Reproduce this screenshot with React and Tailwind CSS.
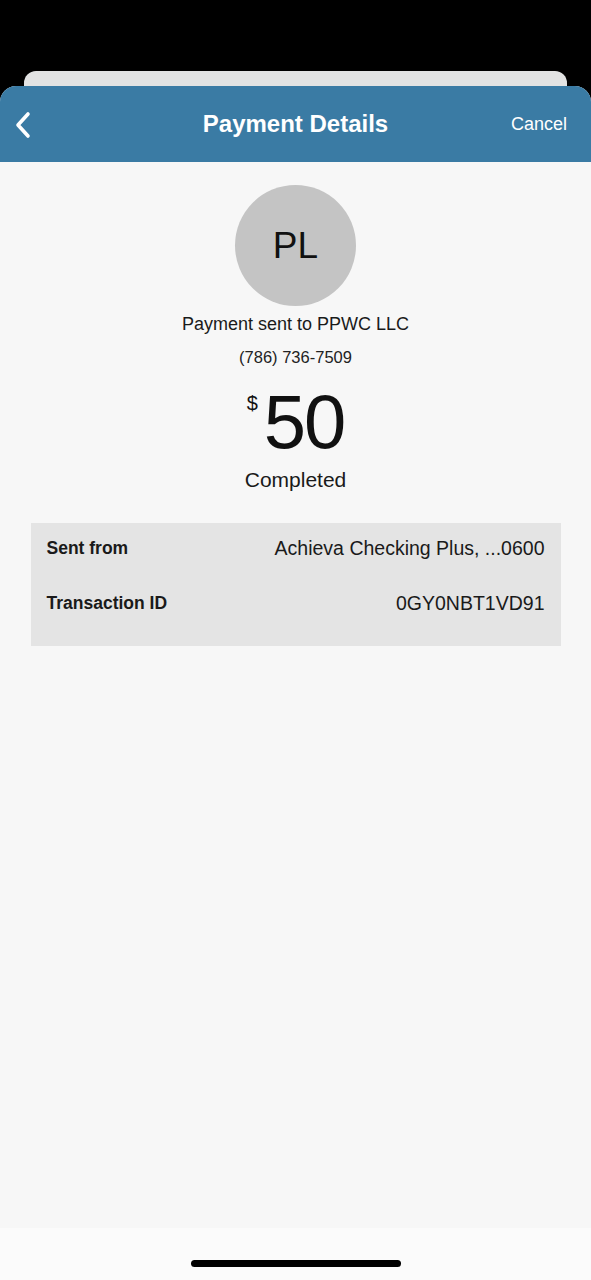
export default function App() {
  return (
    <div
      className="w-[591px] h-[1280px] bg-black flex flex-col overflow-hidden"
      style={{ fontFamily: '"Liberation Sans", Arial, sans-serif' }}
    >
      {/* sheet behind */}
      <div className="h-[71px]" />
      <div className="mx-[24px] h-[15px] bg-[#e2e3e3] rounded-t-[12px]" />

      <div className="flex-1 flex flex-col bg-[#f7f7f7] rounded-t-[16px] overflow-hidden">
        <header className="h-[76px] bg-[#3a7ba4] flex items-center justify-between pl-[14px] relative">
          <svg width="18" height="28" viewBox="0 0 18 28" className="mt-[1px]">
            <polyline points="14,3 4,14 14,25" fill="none" stroke="white" strokeWidth="3.6" strokeLinecap="round" strokeLinejoin="round" />
          </svg>
          <h1 className="absolute left-0 right-0 text-center text-white font-bold text-[24px] pointer-events-none">
            Payment Details
          </h1>
          <span className="text-white text-[18px] pr-[24px]">Cancel</span>
        </header>

        <main className="flex-1 flex flex-col items-center">
          <div className="mt-[23px] w-[121px] h-[121px] rounded-full bg-[#c4c4c4] flex items-center justify-center">
            <span className="text-[37px] text-[#111] leading-none">PL</span>
          </div>
          <p className="mt-[5px] text-[18px] text-[#1a1a1a]">Payment sent to PPWC LLC</p>
          <p className="mt-[7px] text-[16.5px] text-[#222]">(786) 736-7509</p>
          <div className="mt-[12px] flex items-start">
            <span className="text-[20px] text-[#111] mt-[6px] mr-[6px]">$</span>
            <span className="text-[76px] leading-[80px] text-[#111] tracking-[-2px]">50</span>
          </div>
          <p className="mt-[2px] text-[21px] text-[#1a1a1a]">Completed</p>

          <div className="mt-[28px] w-[530px] bg-[#e4e4e4] px-[16px] pt-[14px] pb-[32px] flex flex-col gap-[33px]">
            <div className="flex justify-between items-center leading-[22px]">
              <span className="font-bold text-[#1a1a1a] text-[17.5px]">Sent from</span>
              <span className="text-[#1a1a1a] text-[19.5px]">Achieva Checking Plus, ...0600</span>
            </div>
            <div className="flex justify-between items-center leading-[22px]">
              <span className="font-bold text-[#1a1a1a] text-[17.5px]">Transaction ID</span>
              <span className="text-[#1a1a1a] text-[19.5px]">0GY0NBT1VD91</span>
            </div>
          </div>
        </main>

        <div className="h-[52px] bg-[#fbfbfb] flex items-end justify-center pb-[13px]">
          <div className="w-[210px] h-[7px] rounded-full bg-black" />
        </div>
      </div>
    </div>
  );
}
